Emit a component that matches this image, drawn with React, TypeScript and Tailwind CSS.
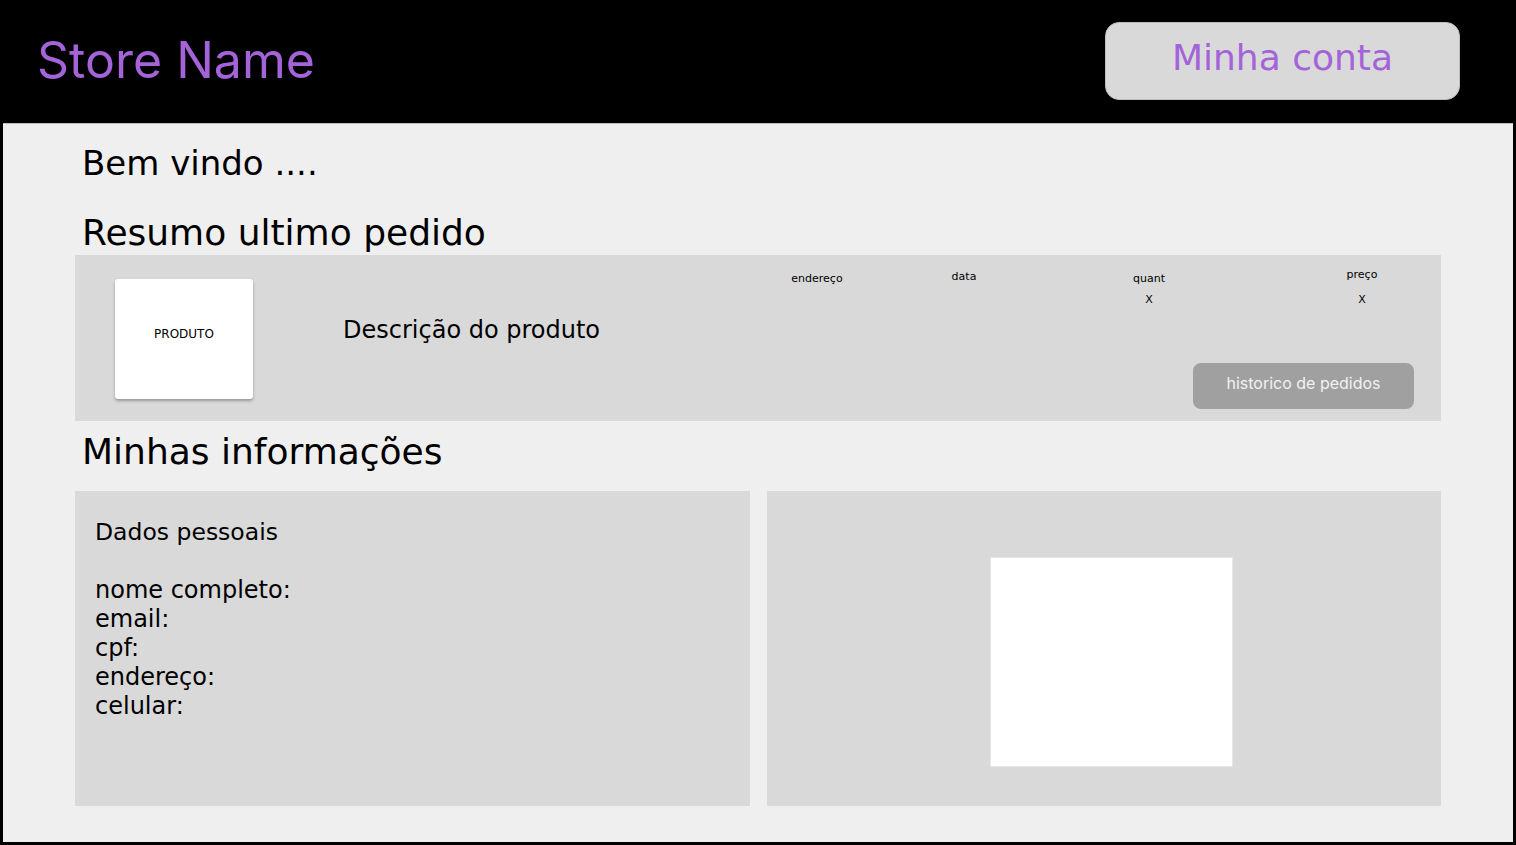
import React from 'react'

const mont = "font-['DejaVu_Sans','Open_Sans',sans-serif]"
const inter = "font-['Inter','Roboto',sans-serif]"

const orderCols = [
  { label: 'endereço', value: '', cls: 'w-[58px] pt-[18px]', gap: 'mt-[10px]' },
  { label: 'data', value: '', cls: 'w-[30px] ml-[103px] pt-[16px]', gap: 'mt-[10px]' },
  { label: 'quant', value: 'X', cls: 'w-[40px] ml-[150px] pt-[18px]', gap: 'mt-[10px]' },
  { label: 'preço', value: 'X', cls: 'w-[40px] ml-[173px] pt-[14px]', gap: 'mt-[14px]' },
]

const infoFields = ['nome completo:', 'email:', 'cpf:', 'endereço:', 'celular:']

export default function App() {
  return (
    <div className="min-h-[845px] w-full flex flex-col bg-[#efefef] border-x-[3px] border-b-[3px] border-black">
      {/* Header */}
      <header className="h-[124px] bg-black flex items-center justify-between pl-[34px] pr-[53px] border-b border-[#bdbdbd]">
        <h1 className={`${inter} text-[50px] leading-none text-[#a463d9] -mt-[3px]`}>Store Name</h1>
        <button className={`${mont} w-[355px] h-[78px] -mt-[2px] rounded-[14px] bg-[#d9d9d9] border border-[#bdbdbd] text-[36px] text-[#a463d9] flex items-center justify-center pb-[6px]`}>
          Minha conta
        </button>
      </header>

      <main className={`${mont} px-[72px] flex flex-col text-black`}>
        <h2 className="text-[34px] leading-none ml-[7px] mt-[22px] h-[46px]">Bem vindo ....</h2>
        <h2 className="text-[36px] leading-none ml-[7px] mt-[23px] h-[40px]">Resumo ultimo pedido</h2>

        {/* Last order */}
        <section className="h-[166px] bg-[#d9d9d9] flex">
          <div className="ml-[40px] mt-[24px] w-[138px] h-[120px] bg-white rounded-[3px] shadow-[0_2px_3px_rgba(0,0,0,0.3)] flex items-center justify-center text-[12px] pb-[10px]">
            PRODUTO
          </div>
          <div className="ml-[90px] mt-[63px] text-[24px] leading-none">Descrição do produto</div>
          <div className="ml-auto mr-[27px] flex flex-col items-end">
            <div className="flex pr-[32px] text-[11px] leading-none">
              {orderCols.map((c) => (
                <div key={c.label} className={`${c.cls} flex flex-col items-center`}>
                  <span>{c.label}</span>
                  {c.value && <span className={c.gap}>{c.value}</span>}
                </div>
              ))}
            </div>
            <button className={`${inter} mt-auto mb-[12px] w-[221px] h-[46px] rounded-[8px] bg-[#a0a0a0] text-[#f2f2f2] text-[16px] pb-[6px]`}>
              historico de pedidos
            </button>
          </div>
        </section>

        <h2 className="text-[36px] leading-none ml-[7px] mt-[13px] h-[57px]">Minhas informações</h2>

        {/* Info panels */}
        <section className="grid grid-cols-2 gap-[17px] h-[315px]">
          <div className="bg-[#d9d9d9] px-[20px] pt-[27px] text-[24px] leading-[29px]">
            <p className="text-[23.5px]">Dados pessoais</p>
            <p className="h-[29px]" />
            {infoFields.map((f) => (
              <p key={f}>{f}</p>
            ))}
          </div>
          <div className="bg-[#d9d9d9] flex justify-center pt-[66px] pl-[16px]">
            <div className="w-[243px] h-[210px] bg-white border border-[#e6e6e6]" />
          </div>
        </section>
      </main>
    </div>
  )
}
